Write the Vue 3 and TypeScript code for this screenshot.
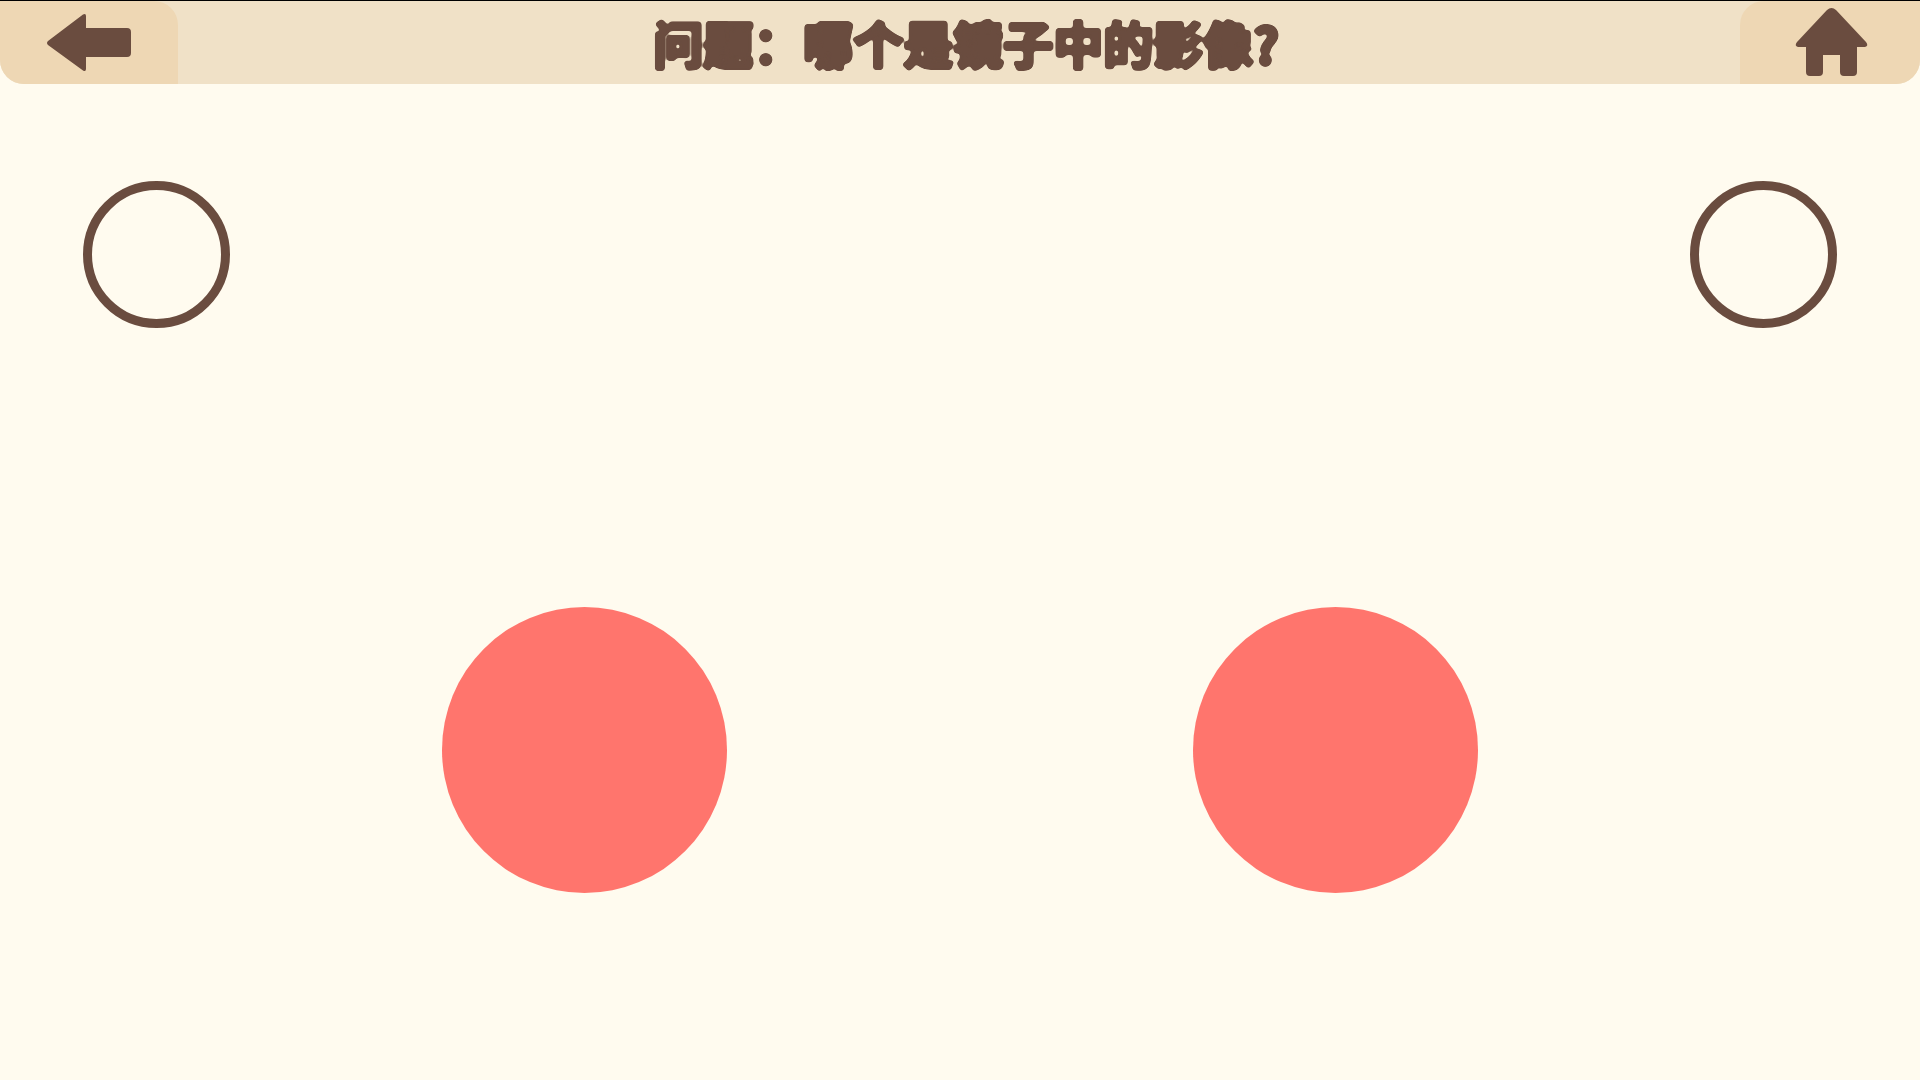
<script setup lang="ts">
const title = '问题\uFF1A哪个是镜子中的影像?'
</script>

<template>
  <div class="page">
    <header class="bar">
      <button class="tab tab-left" aria-label="返回">
        <svg class="icon" width="178" height="83" viewBox="0 0 178 83">
          <path d="M83 13.5 L48 40 Q46 42 48 44 L83 69.5 Q86 71 86 68 V56 H127 Q131 56 131 52 V31 Q131 27 127 27 H86 V15 Q86 12 83 13.5 Z" fill="#6a4c3f" />
        </svg>
      </button>
      <h1 class="title">
        <svg class="title-svg" width="660" height="83" viewBox="0 0 660 83">
          <defs>
            <filter id="soft" x="-5%" y="-20%" width="110%" height="140%" color-interpolation-filters="sRGB">
              <feGaussianBlur stdDeviation="1.5" />
              <feComponentTransfer>
                <feFuncA type="linear" slope="5" intercept="-1.6" />
              </feComponentTransfer>
            </filter>
          </defs>
          <text x="330" y="63" text-anchor="middle" filter="url(#soft)">{{ title }}</text>
        </svg>
      </h1>
      <button class="tab tab-right" aria-label="主页">
        <svg class="icon" width="180" height="83" viewBox="0 0 180 83">
          <path d="M87 9 Q91.5 5 96 9 L126 41 Q129 45 125 46 H117 V71 Q117 75 113 75 H104 Q100 75 100 71 V54 H83 V71 Q83 75 79 75 H70 Q66 75 66 71 V46 H58 Q54 45 57 41 Z" fill="#6a4c3f" />
        </svg>
      </button>
    </header>

    <section class="rings">
      <span class="ring"></span>
      <span class="ring"></span>
    </section>

    <section class="balls">
      <span class="ball"></span>
      <span class="ball"></span>
    </section>
  </div>
</template>

<style scoped>
.page {
  height: 1080px;
  background: #fffbef;
  overflow: hidden;
}
.bar {
  height: 84px;
  box-sizing: border-box;
  border-top: 1px solid #000;
  background: #f0e1c7;
  border-radius: 0 0 24px 24px;
  display: flex;
  align-items: stretch;
  overflow: hidden;
}
.tab {
  border: 0;
  padding: 0;
  margin: 0;
  background: #eed7b4;
  display: block;
  flex: none;
}
.tab-left {
  width: 178px;
  border-radius: 0 24px 0 0;
}
.tab-right {
  width: 180px;
  border-radius: 24px 0 0 0;
}
.icon {
  display: block;
}
.title {
  margin: 0;
  flex: 1;
  min-width: 0;
  display: flex;
  justify-content: center;
  padding-left: 14px;
}
.title-svg {
  display: block;
  flex: none;
}
.title-svg text {
  font-family: "Noto Sans CJK SC", sans-serif;
  font-weight: 700;
  font-size: 50px;
  fill: #6a4c3f;
  stroke: #6a4c3f;
  stroke-width: 3.5px;
  stroke-linejoin: round;
}
.rings {
  display: flex;
  justify-content: space-between;
  padding: 97px 83px 0;
}
.ring {
  width: 147px;
  height: 147px;
  box-sizing: border-box;
  border: 9px solid #6a4c3f;
  border-radius: 50%;
}
.balls {
  display: flex;
  gap: 466px;
  padding: 279px 0 0 442px;
}
.ball {
  width: 285px;
  height: 286px;
  border-radius: 50%;
  background: #ff756d;
}
</style>
